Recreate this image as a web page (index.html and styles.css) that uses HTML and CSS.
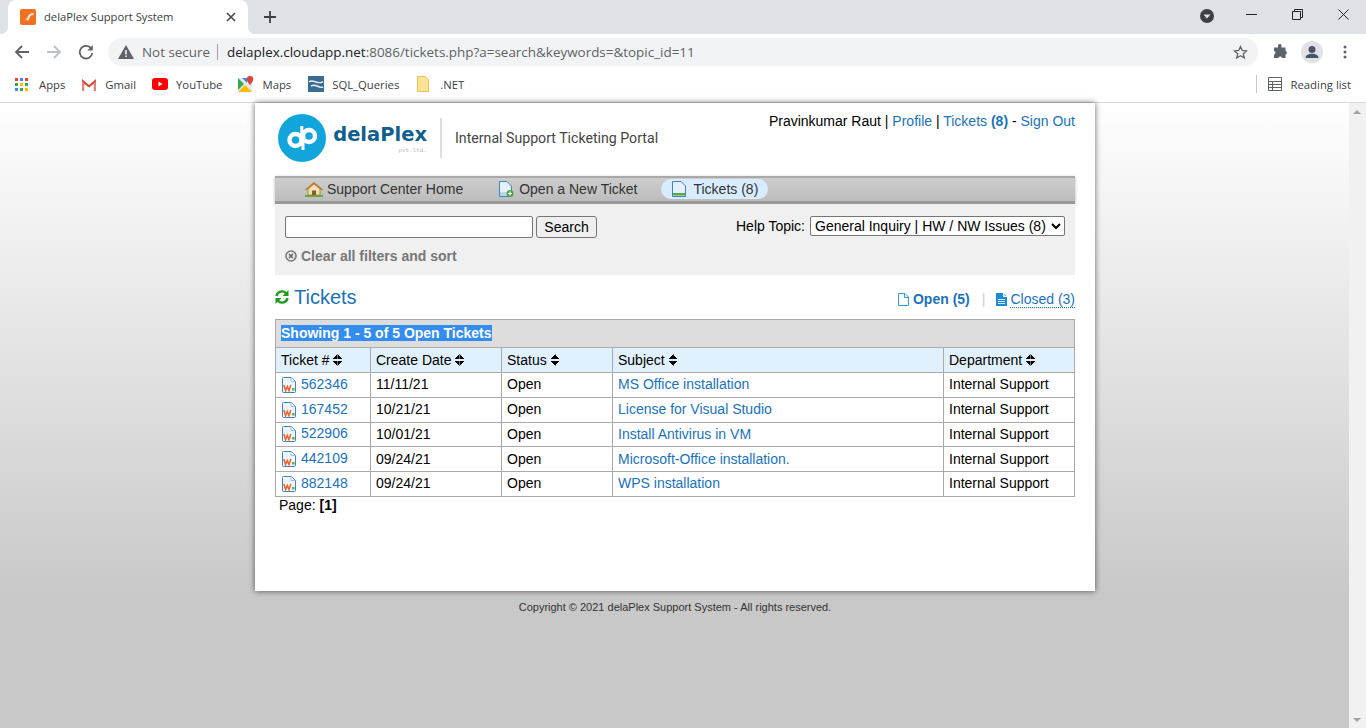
FILE: index.html
```html
<!DOCTYPE html>
<html lang="en">
<head>
  <meta charset="UTF-8">
  <title>delaPlex Support System</title>
  <link rel="stylesheet" href="styles.css">
</head>
<body>
  <!-- Shared icons -->
  <svg class="defs" width="0" height="0">
    <symbol id="ticket-doc" viewBox="0 0 16 16">
      <path d="M1.500 1.500a1 1 0 0 1 1-1H10l4.500 4v10a1 1 0 0 1-1 1h-11a1 1 0 0 1-1-1z" fill="#eef5fc" stroke="#3a84c9"/>
      <path d="M10 .8V4.500h4.200" fill="#fff" stroke="#9cc0e4"/>
      <path d="M2.800 8l1.800 5.500L6.300 9.500 8 13.500 9.800 8" fill="none" stroke="#f2622a" stroke-width="1.500"/>
      <rect x="11" y="11" width="2.500" height="2.500" fill="#6ab04a"/>
    </symbol>
  </svg>

  <!-- Browser window -->
  <header class="browser">
    <div class="tabstrip">
      <div class="tab">
        <svg class="favicon" width="16" height="16" viewBox="0 0 16 16">
          <rect width="16" height="16" rx="2" fill="#f07022"/>
          <path d="M2 14c2-1 3-4 5-5 1-3 3-5 7-5.500l-1 1.500 1 1-3 .5c-1 1-1.500 2-1.500 3L8 12l-2-2c-1 1-2 3-4 4z" fill="#fde6d4"/>
        </svg>
        <span class="tab-title">delaPlex Support System</span>
        <svg class="tab-close" width="10" height="10" viewBox="0 0 10 10"><path d="M1 1l8 8M9 1l-8 8" stroke="#45494e" stroke-width="1.600"/></svg>
      </div>
      <svg class="new-tab" width="12" height="12" viewBox="0 0 12 12"><path d="M6 0v12M0 6h12" stroke="#3c4043" stroke-width="1.800"/></svg>
      <div class="window-controls">
        <svg class="profile-drop" width="14" height="14" viewBox="0 0 14 14"><circle cx="7" cy="7" r="7" fill="#3c4043"/><path d="M3.500 5.500h7L7 9.500z" fill="#dee1e6"/></svg>
        <svg class="win-btn" width="11" height="11" viewBox="0 0 11 11"><path d="M0 5.500h11" stroke="#222" stroke-width="1"/></svg>
        <svg class="win-btn" width="11" height="11" viewBox="0 0 11 11"><path d="M.5 2.500h8v8h-8zM2.500 2.500v-2h8v8h-2" fill="none" stroke="#222"/></svg>
        <svg class="win-btn" width="11" height="11" viewBox="0 0 11 11"><path d="M.5.500l10 10M10.500.500l-10 10" stroke="#222"/></svg>
      </div>
    </div>

    <div class="toolbar">
      <svg class="tool-icon" width="16" height="16" viewBox="0 0 16 16"><path d="M15 8H2M8 2L2 8l6 6" fill="none" stroke="#5f6368" stroke-width="1.800"/></svg>
      <svg class="tool-icon" width="16" height="16" viewBox="0 0 16 16"><path d="M1 8h13M8 2l6 6-6 6" fill="none" stroke="#bdc1c6" stroke-width="1.800"/></svg>
      <svg class="tool-icon" width="16" height="16" viewBox="0 0 16 16"><path d="M13.500 5A6.300 6.300 0 1 0 14.300 9" fill="none" stroke="#5f6368" stroke-width="1.800"/><path d="M14.800 1v5.500H9.300z" fill="#5f6368"/></svg>
      <div class="omnibox">
        <svg width="16" height="14" viewBox="0 0 16 14"><path d="M8 0l8 14H0z" fill="#5f6368"/><path d="M7.200 5h1.600v4.500H7.200zM7.200 10.500h1.600V12H7.200z" fill="#f1f3f4"/></svg>
        <span class="not-secure">Not secure</span>
        <span class="omni-sep"></span>
        <span class="url"><b>delaplex.cloudapp.net</b>:8086/tickets.php?a=search&amp;keywords=&amp;topic_id=11</span>
        <svg class="star" width="15" height="15" viewBox="0 0 15 15"><path d="M7.500 1.500l1.800 4 4.300.4-3.300 2.900 1 4.200-3.800-2.200-3.800 2.200 1-4.200L1.400 5.900l4.300-.4z" fill="none" stroke="#5f6368" stroke-width="1.300"/></svg>
      </div>
      <svg class="puzzle" width="16" height="16" viewBox="0 0 16 16"><path d="M6 1.500a1.800 1.800 0 0 1 3.500 0V3.500h4v3.500a1.800 1.800 0 0 1 0 3.500v3.500H10a1.800 1.800 0 0 0-3.500 0H2v-3.500a1.800 1.800 0 0 0 0-3.500V3.500h4z" fill="#5f6368"/></svg>
      <svg class="avatar" width="22" height="22" viewBox="0 0 22 22"><circle cx="11" cy="11" r="11" fill="#e0e2e6"/><circle cx="11" cy="8.500" r="3.500" fill="#4a5468"/><path d="M4.500 17c0-3 3.500-4.200 6.500-4.200s6.500 1.200 6.500 4.200z" fill="#4a5468"/></svg>
      <svg class="menu-dots" width="4" height="14" viewBox="0 0 4 14"><circle cx="2" cy="2" r="1.500" fill="#5f6368"/><circle cx="2" cy="7" r="1.500" fill="#5f6368"/><circle cx="2" cy="12" r="1.500" fill="#5f6368"/></svg>
    </div>

    <nav class="bookmarks">
      <a class="bookmark">
        <svg class="apps" width="13" height="13" viewBox="0 0 13 13">
          <rect width="3" height="3" fill="#ea4335"/><rect x="5" width="3" height="3" fill="#4285f4"/><rect x="10" width="3" height="3" fill="#ea4335"/>
          <rect y="5" width="3" height="3" fill="#34a853"/><rect x="5" y="5" width="3" height="3" fill="#fbbc05"/><rect x="10" y="5" width="3" height="3" fill="#34a853"/>
          <rect y="10" width="3" height="3" fill="#4285f4"/><rect x="5" y="10" width="3" height="3" fill="#34a853"/><rect x="10" y="10" width="3" height="3" fill="#fbbc05"/>
        </svg>Apps</a>
      <a class="bookmark">
        <svg width="16" height="13" viewBox="0 0 16 13"><path d="M1 13V1l7 6 7-6v12h-3V6L8 9.500 4 6v7z" fill="#e8e3e0"/><path d="M1 13V1l7 6 7-6v3L8 9.500 1 4z" fill="#d9463a"/><path d="M1 3v10h2V5zM15 3v10h-2V5z" fill="#d9867e"/></svg>Gmail</a>
      <a class="bookmark">
        <svg width="16" height="12" viewBox="0 0 16 12"><rect width="16" height="12" rx="3" fill="#f00"/><path d="M6.500 3.500v5l4-2.500z" fill="#fff"/></svg>YouTube</a>
      <a class="bookmark">
        <svg width="16" height="16" viewBox="0 0 16 16"><path d="M0 2h14v14H0z" fill="#e8eaed"/><path d="M0 2l6 6-6 6z" fill="#34a853"/><path d="M0 16l7-7 7 7z" fill="#fbbc05"/><path d="M4 2h5v5z" fill="#4285f4"/><path d="M12 0a3.200 3.200 0 0 1 3.200 3.200C15.200 5.500 12 9 12 9S8.800 5.500 8.800 3.200A3.200 3.200 0 0 1 12 0z" fill="#db4437"/></svg>Maps</a>
      <a class="bookmark bookmark-sql">
        <svg width="16" height="16" viewBox="0 0 16 16"><rect width="16" height="16" fill="#3a6b92"/><path d="M1 6c2-2 4-1 7 0s4 1 7 0M15 11c-2 1-4 0-6-1s-4-1-6 0" fill="none" stroke="#e9f0f5" stroke-width="1.400"/></svg>SQL_Queries</a>
      <a class="bookmark bookmark-net">
        <svg width="12" height="16" viewBox="0 0 12 16"><path d="M.5.500h8l3 3v12H.5z" fill="#fde293" stroke="#e9c45a"/></svg><span class="net">.NET</span></a>
      <div class="reading-list">
        <svg width="14" height="14" viewBox="0 0 14 14"><path d="M.5.500h13v13H.5zM.5 4.500h13M.5 7.500h13M.5 10.500h13M4.500 4.500v9" fill="none" stroke="#5f6368"/></svg>
        Reading list
      </div>
    </nav>
  </header>

  <div class="viewport">
    <main class="page">
      <div class="container">
        <!-- Page header -->
        <div class="header">
          <div class="logo">
            <svg width="48" height="48" viewBox="0 0 48 48">
              <circle cx="24" cy="24" r="24" fill="#12a5dc"/>
              <circle cx="17.500" cy="26" r="6" fill="none" stroke="#fff" stroke-width="4.500"/>
              <circle cx="31" cy="22" r="6" fill="none" stroke="#fff" stroke-width="4.500"/>
              <path d="M23.800 12v20M25 16v20" stroke="#fff" stroke-width="3"/>
            </svg>
            <div class="logo-name">
              <span class="logo-word">delaPlex</span>
              <span class="logo-sub">pvt.ltd.</span>
            </div>
            <span class="logo-tag">Internal Support Ticketing Portal</span>
          </div>
          <p class="user-links">Pravinkumar Raut | <a href="#">Profile</a> | <a href="#">Tickets <b>(8)</b></a> - <a href="#">Sign Out</a></p>
        </div>

        <!-- Navigation -->
        <ul class="nav">
          <li class="nav-item nav-home">
            <svg width="18" height="16" viewBox="0 0 18 16"><path d="M3 8v6h12V8L9 2.500z" fill="#f2dfb4" stroke="#b48a4a"/><path d="M0 8.500L9 1l9 7.500-1.200 1L9 3.200 1.200 9.500z" fill="#b9793a"/><rect x="7" y="9.500" width="4" height="4.500" fill="#8a5a2a"/><path d="M0 14h18v2H0z" fill="#62a83f"/></svg>
            Support Center Home
          </li>
          <li class="nav-item">
            <svg width="16" height="16" viewBox="0 0 16 16"><path d="M1.500.500H9L13.500 5v10.500h-12z" fill="#e6f0fb" stroke="#3c84c8"/><path d="M2 11h11v4H2z" fill="#bcd6f0"/><circle cx="12" cy="12.500" r="3.500" fill="#4ea24a"/><path d="M12 10.500v4M10 12.500h4" stroke="#fff" stroke-width="1.200"/></svg>
            Open a New Ticket
          </li>
          <li class="nav-item active">
            <svg width="14" height="16" viewBox="0 0 14 16"><path d="M.5.500H9L13.500 5v10.500H.5z" fill="#e6f0fb" stroke="#3c84c8"/><path d="M1 12h12v2.500H1z" fill="#5aa83a"/></svg>
            Tickets (8)
          </li>
        </ul>

        <!-- Search -->
        <form class="search-panel">
          <div class="search-row">
            <input class="search-input" type="text">
            <button class="search-btn" type="button">Search</button>
            <label class="topic">Help Topic:
              <select class="topic-select">
                <option>General Inquiry | HW / NW Issues (8)</option>
              </select>
            </label>
          </div>
          <a class="clear-link">
            <svg width="12" height="12" viewBox="0 0 12 12"><circle cx="6" cy="6" r="5" fill="none" stroke="#777" stroke-width="1.600"/><path d="M4 4l4 4M8 4l-4 4" stroke="#777" stroke-width="1.800"/></svg>
            Clear all filters and sort
          </a>
        </form>

        <!-- Title row -->
        <div class="title-row">
          <h1 class="title">
            <svg width="14" height="14" viewBox="0 0 14 14"><path d="M1.500 6A5.500 5.500 0 0 1 11 3.200" fill="none" stroke="#1b9c1b" stroke-width="2.400"/><path d="M13.500 0v6h-6z" fill="#1b9c1b"/><path d="M12.500 8A5.500 5.500 0 0 1 3 10.800" fill="none" stroke="#1b9c1b" stroke-width="2.400"/><path d="M.5 14V8h6z" fill="#1b9c1b"/></svg>
            Tickets
          </h1>
          <div class="states">
            <a class="state">
              <svg width="11" height="13" viewBox="0 0 11 13"><path d="M.5.500H7L10.500 4v8.500H.5z" fill="#fff" stroke="#2f9be0"/><path d="M6.500.500V4.500h4" fill="none" stroke="#2f9be0"/></svg>
              <b>Open (5)</b>
            </a>
            <span class="state-sep">|</span>
            <a class="state state-link">
              <svg width="11" height="13" viewBox="0 0 11 13"><path d="M0 0h7v4h4v9H0z" fill="#1f8bd8"/><path d="M8 0l3 3H8zM2 6.500h7M2 8.500h7M2 10.500h7" fill="#1f8bd8" stroke="#fff" stroke-width=".8"/></svg>
              <span class="state-closed">Closed (3)</span>
            </a>
          </div>
        </div>

        <!-- Tickets -->
        <table class="tickets">
          <colgroup>
            <col class="col-number"><col class="col-date"><col class="col-status"><col class="col-subject"><col class="col-dept">
          </colgroup>
          <caption class="tickets-caption"><span class="selected">Showing 1 - 5 of 5 Open Tickets</span></caption>
          <thead>
            <tr>
              <th>Ticket # <span class="sort"></span></th>
              <th>Create Date <span class="sort"></span></th>
              <th>Status <span class="sort"></span></th>
              <th>Subject <span class="sort"></span></th>
              <th>Department <span class="sort"></span></th>
            </tr>
          </thead>
          <tbody>
            <tr>
              <td><svg class="doc" width="16" height="16"><use href="#ticket-doc"/></svg><a href="#">562346</a></td>
              <td>11/11/21</td><td>Open</td><td><a href="#">MS Office installation</a></td><td>Internal Support</td>
            </tr>
            <tr>
              <td><svg class="doc" width="16" height="16"><use href="#ticket-doc"/></svg><a href="#">167452</a></td>
              <td>10/21/21</td><td>Open</td><td><a href="#">License for Visual Studio</a></td><td>Internal Support</td>
            </tr>
            <tr>
              <td><svg class="doc" width="16" height="16"><use href="#ticket-doc"/></svg><a href="#">522906</a></td>
              <td>10/01/21</td><td>Open</td><td><a href="#">Install Antivirus in VM</a></td><td>Internal Support</td>
            </tr>
            <tr>
              <td><svg class="doc" width="16" height="16"><use href="#ticket-doc"/></svg><a href="#">442109</a></td>
              <td>09/24/21</td><td>Open</td><td><a href="#">Microsoft-Office installation.</a></td><td>Internal Support</td>
            </tr>
            <tr>
              <td><svg class="doc" width="16" height="16"><use href="#ticket-doc"/></svg><a href="#">882148</a></td>
              <td>09/24/21</td><td>Open</td><td><a href="#">WPS installation</a></td><td>Internal Support</td>
            </tr>
          </tbody>
        </table>
        <p class="pager">Page: <b>[1]</b></p>
      </div>
      <p class="copyright">Copyright &copy; 2021 delaPlex Support System - All rights reserved.</p>
    </main>

    <div class="scrollbar">
      <span class="arrow-up"></span>
      <span class="arrow-down"></span>
    </div>
  </div>
</body>
</html>
```

FILE: styles.css
```css
/* Global */
* {
  box-sizing: border-box;
}

html,
body {
  height: 100%;
}

body {
  margin: 0;
  display: flex;
  flex-direction: column;
  overflow: hidden;
  font-family: "Liberation Sans", Arial, sans-serif;
  font-size: 14px;
  color: #000;
}

a {
  color: #1b72b8;
  text-decoration: none;
}

svg {
  flex-shrink: 0;
}

.defs {
  position: absolute;
}

/* Browser window */
.browser {
  height: 103px;
  flex-shrink: 0;
  background: #fff;
  border-bottom: 1px solid #d9d9d9;
  font-family: "Open Sans", "Noto Sans", sans-serif;
}

.tabstrip {
  height: 34px;
  display: flex;
  align-items: center;
  background: #dee1e6;
  padding-left: 8px;
}

.tab {
  position: relative;
  width: 240px;
  height: 34px;
  display: flex;
  align-items: center;
  padding: 0 12px;
  background: #fff;
  border-radius: 8px 8px 0 0;
}

.tab::before,
.tab::after {
  content: "";
  position: absolute;
  bottom: 0;
  width: 8px;
  height: 8px;
}

.tab::before {
  left: -8px;
  background: radial-gradient(circle at 0 0, #dee1e6 8px, #fff 8.5px);
}

.tab::after {
  right: -8px;
  background: radial-gradient(circle at 100% 0, #dee1e6 8px, #fff 8.5px);
}

.tab-title {
  margin: 0 0 2px 8px;
  flex: 1;
  font-size: 11.200px;
  color: #3c4043;
  white-space: nowrap;
}

.new-tab {
  margin-left: 16px;
}

.window-controls {
  margin-left: auto;
  margin-bottom: 5px;
  display: flex;
  align-items: center;
  padding-right: 17px;
}

.profile-drop {
  margin-right: 32px;
  margin-top: 3px;
}

.win-btn + .win-btn {
  margin-left: 35px;
}

.toolbar {
  height: 36px;
  display: flex;
  align-items: center;
  padding-left: 14px;
}

.tool-icon {
  margin-right: 16px;
}

.tool-icon:nth-child(3) {
  margin-right: 14px;
}

.omnibox {
  width: 1150px;
  height: 28px;
  display: flex;
  align-items: center;
  padding: 0 10px;
  background: #f1f3f4;
  border-radius: 14px;
}

.not-secure {
  margin-left: 8px;
  font-size: 13.400px;
  color: #5f6368;
}

.omni-sep {
  width: 1px;
  height: 16px;
  margin: 0 9px 0 7px;
  background: #9aa0a6;
}

.url {
  font-size: 13.440px;
  color: #5f6368;
  white-space: nowrap;
}

.url b {
  font-weight: 400;
  color: #202124;
}

.star {
  margin-left: auto;
}

.puzzle {
  margin-left: 14px;
}

.avatar {
  margin-left: 13px;
}

.menu-dots {
  margin-left: 20px;
}

.bookmarks {
  height: 32px;
  display: flex;
  align-items: center;
  padding: 0 0 4px 15px;
  font-size: 11.300px;
}

.bookmark {
  display: flex;
  align-items: center;
  gap: 8px;
  margin-right: 16px;
  color: #3c4043;
}

.bookmark-sql {
  margin-left: 1px;
}

.bookmark-net {
  margin-left: 2px;
}

.apps {
  margin-right: 3px;
}

.net {
  margin-left: 3px;
}

.reading-list {
  margin-left: auto;
  height: 18px;
  display: flex;
  align-items: center;
  gap: 9px;
  padding: 0 15px 0 11px;
  border-left: 1px solid #c8c8c8;
  color: #3c4043;
}

/* Page */
.viewport {
  flex: 1;
  display: flex;
  min-height: 0;
}

.page {
  flex: 1;
  padding-left: 255px;
  background: linear-gradient(#fff 0, #c8c8c8 500px);
}

.container {
  width: 840px;
  height: 488px;
  padding: 0 20px;
  background: #fff;
  box-shadow: 0 0 6px rgba(0, 0, 0, 0.6);
}

.header {
  height: 73px;
  display: flex;
  justify-content: space-between;
}

.logo {
  display: flex;
  align-items: center;
  padding: 0 0 3px 3px;
}

.logo-name {
  width: 116px;
  height: 40px;
  padding: 5px 13px 0 0;
  display: flex;
  flex-direction: column;
  align-items: flex-end;
  border-right: 2px solid #ddd;
}

.logo-word {
  font-family: "DejaVu Sans", sans-serif;
  font-weight: 700;
  font-size: 19.500px;
  line-height: 24px;
  color: #115f8c;
  white-space: nowrap;
}

.logo-sub {
  font-family: "Liberation Mono", monospace;
  font-size: 6px;
  line-height: 8px;
  color: #bbb;
}

.logo-tag {
  margin-left: 13px;
  font-family: Roboto, sans-serif;
  font-size: 14.150px;
  color: #444;
}

.user-links {
  margin: 10px 0 0;
}

/* Navigation */
.nav {
  height: 28px;
  margin: 0;
  padding: 1px 0 0 30px;
  display: flex;
  gap: 35px;
  list-style: none;
  background: linear-gradient(#cdcdcd, #bdbdbd);
  border-top: 2px solid #a9a9a9;
  border-bottom: 3px solid #999;
  box-shadow: 0 1px 3px rgba(0, 0, 0, 0.3);
}

.nav-item {
  height: 20px;
  display: flex;
  align-items: center;
  gap: 5px;
  color: #333;
}

.nav-home {
  gap: 4px;
}

.nav-item.active {
  margin-left: -11px;
  gap: 7px;
  padding: 0 10px 0 11px;
  background: #d9ebff;
  border-radius: 10px;
}

/* Search */
.search-panel {
  height: 71px;
  padding: 12px 10px 0;
  background: #f0f0f0;
}

.search-row {
  display: flex;
  align-items: flex-start;
}

.search-input {
  width: 248px;
  height: 22px;
  border: 1px solid #767676;
  border-radius: 2px;
  background: #fff;
}

.search-btn {
  width: 61px;
  height: 22px;
  margin-left: 3px;
  padding: 0;
  border: 1px solid #767676;
  border-radius: 3px;
  background: #efefef;
  font: inherit;
  color: #000;
}

.topic {
  margin-left: auto;
  display: flex;
  align-items: center;
  gap: 5px;
  height: 20px;
}

.topic-select {
  width: 255px;
  height: 20px;
  padding: 0;
  border: 1px solid #767676;
  border-radius: 2px;
  background-color: #fff;
  font: inherit;
}

.clear-link {
  display: flex;
  align-items: center;
  gap: 4px;
  margin-top: 10px;
  font-weight: 700;
  color: #777;
}

/* Title row */
.title-row {
  height: 44px;
  display: flex;
  align-items: center;
  justify-content: space-between;
}

.title {
  margin: 0;
  display: flex;
  align-items: center;
  gap: 5px;
  font-size: 20px;
  font-weight: 400;
  color: #1b72b8;
}

.states {
  display: flex;
  align-items: center;
  padding-top: 4px;
}

.state {
  display: flex;
  align-items: center;
  gap: 4px;
}

.state-link {
  gap: 3px;
}

.state-sep {
  margin: 0 11px 0 12px;
  color: #ccc;
}

.state-closed {
  border-bottom: 1px dotted #1b72b8;
}

/* Tickets table */
.tickets {
  width: 799px;
  table-layout: fixed;
  border-collapse: collapse;
}

.col-number { width: 95px; }
.col-date { width: 131px; }
.col-status { width: 111px; }
.col-subject { width: 331px; }
.col-dept { width: 131px; }

.tickets-caption {
  height: 28px;
  padding: 5px 5px 0;
  text-align: left;
  background: #ddd;
  border: 1px solid #aaa;
  border-bottom: 0;
  font-weight: 700;
  color: #fff;
}

.selected {
  background: #338cf0;
}

.tickets th,
.tickets td {
  padding: 0 5px;
  border: 1px solid #aaa;
  text-align: left;
  font-weight: 400;
  white-space: nowrap;
}

.tickets th {
  height: 25px;
  background: #e0f0fd;
}

.tickets td {
  height: 24.750px;
  padding-bottom: 1px;
}

.doc {
  margin-right: 4px;
  vertical-align: -4px;
}

.sort {
  display: inline-block;
  width: 9px;
  height: 12px;
  vertical-align: -1px;
  background:
    linear-gradient(to bottom right, transparent 50%, #000 50%) 0 0 / 4.500px 5px no-repeat,
    linear-gradient(to bottom left, transparent 50%, #000 50%) 4.500px 0 / 4.500px 5px no-repeat,
    linear-gradient(to top right, transparent 50%, #000 50%) 0 7px / 4.500px 5px no-repeat,
    linear-gradient(to top left, transparent 50%, #000 50%) 4.500px 7px / 4.500px 5px no-repeat;
}

.pager {
  margin: 0 0 0 4px;
}

.copyright {
  width: 840px;
  margin: 10px 0 0;
  text-align: center;
  font-size: 11px;
  color: #333;
}

/* Scrollbar */
.scrollbar {
  width: 17px;
  flex-shrink: 0;
  display: flex;
  flex-direction: column;
  justify-content: space-between;
  padding: 7px 3px 6px 4px;
  background: #f1f1f1;
}

.arrow-up,
.arrow-down {
  width: 0;
  height: 0;
  border-left: 4px solid transparent;
  border-right: 4px solid transparent;
}

.arrow-up {
  border-bottom: 4px solid #a3a3a3;
}

.arrow-down {
  border-top: 4px solid #a3a3a3;
}
```
